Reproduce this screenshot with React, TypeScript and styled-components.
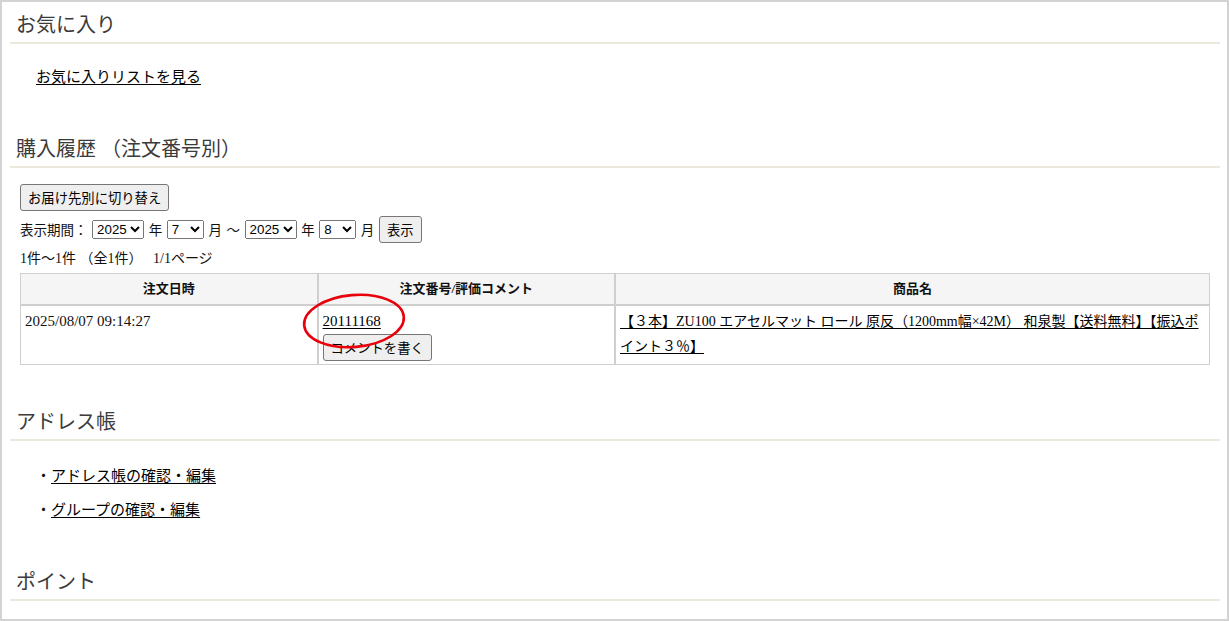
import React from "react";
import styled, { createGlobalStyle } from "styled-components";

const Global = createGlobalStyle`
  html, body { margin: 0; padding: 0; background: #fff; }
  body {
    font-family: "Liberation Serif", "Noto Sans CJK JP", serif;
    color: #111;
  }
  * { box-sizing: border-box; }
`;

const Frame = styled.div`
  height: 621px;
  border: 2px solid #d3d3d3;
  padding: 1px 7px 0 8px;
  overflow: hidden;
  background: #fff;
`;

const Section = styled.section<{ $after: number }>`
  padding-bottom: ${(p) => p.$after}px;
`;

const Heading = styled.h2`
  margin: 0;
  padding: 8px 6px 3px;
  font-family: "Liberation Serif", "Noto Sans CJK JP", serif;
  font-size: 20px;
  line-height: 28px;
  font-weight: 400;
  color: #3b3b3b;
  border-bottom: 2px solid #ebe9de;
`;

const Body = styled.div<{ $top: number; $indent: number }>`
  padding: ${(p) => p.$top}px 10px 0 ${(p) => p.$indent}px;
`;

const Line = styled.div`
  font-size: 15px;
  line-height: 22px;
`;

const TextLink = styled.a`
  color: #000;
  text-decoration: underline;
  text-underline-offset: 2px;
  cursor: pointer;
`;

const Button = styled.button`
  display: inline-block;
  font-family: "Noto Sans CJK JP", "Liberation Sans", sans-serif;
  font-size: 13.333px;
  line-height: 17px;
  padding: 4px 7px;
  border: 1px solid #767676;
  border-radius: 3px;
  background: #efefef;
  color: #000;
`;

const PeriodRow = styled.div`
  margin-top: 5px;
  display: flex;
  align-items: center;
  gap: 4.6px;
  height: 26px;
  font-family: "Noto Sans CJK JP", sans-serif;
  font-size: 13.5px;
  color: #111;
`;

const Select = styled.select`
  font-family: "Liberation Sans", Arial, sans-serif;
  font-size: 13.333px;
  color: #000;
`;

const Count = styled.div`
  margin-top: 7px;
  font-size: 14px;
  line-height: 20px;
`;

const Table = styled.table`
  margin-top: 4px;
  width: 100%;
  table-layout: fixed;
  border-collapse: separate;
  border-spacing: 0;
`;

const Th = styled.th<{ $wide?: boolean }>`
  width: ${(p) => (p.$wide ? "50%" : "auto")};
  border: 1px solid #cfcfcf;
  background: #f5f5f5;
  font-size: 13px;
  font-weight: 700;
  line-height: 24px;
  padding: 3px 4px;
  text-align: center;
  color: #111;
`;

const Td = styled.td<{ $small?: boolean }>`
  position: relative;
  border: 1px solid #cfcfcf;
  vertical-align: top;
  padding: 3px 4px;
  font-size: ${(p) => (p.$small ? "14px" : "15px")};
  line-height: 25px;
  color: #111;
`;

const CellLine = styled.div`
  line-height: 25px;
`;

const Annotation = styled.svg`
  position: absolute;
  left: -18px;
  top: -14px;
  width: 108px;
  height: 58px;
  pointer-events: none;
  overflow: visible;
`;

const List = styled.ul`
  margin: 0;
  padding: 0;
  list-style: none;
  display: flex;
  flex-direction: column;
  gap: 12px;
`;

const Item = styled.li`
  font-size: 15px;
  line-height: 22px;
`;

const years = ["2024", "2025"];
const months = Array.from({ length: 12 }, (_, i) => String(i + 1));

export default function App() {
  return (
    <>
      <Global />
      <Frame>
        <Section $after={39}>
          <Heading>お気に入り</Heading>
          <Body $top={22} $indent={26}>
            <Line>
              <TextLink>お気に入りリストを見る</TextLink>
            </Line>
          </Body>
        </Section>

        <Section $after={35}>
          <Heading>購入履歴 （注文番号別）</Heading>
          <Body $top={16} $indent={10}>
            <Button>お届け先別に切り替え</Button>
            <PeriodRow>
              <span>表示期間：</span>
              <Select defaultValue="2025">
                {years.map((y) => (
                  <option key={y}>{y}</option>
                ))}
              </Select>
              <span>年</span>
              <Select defaultValue="7">
                {months.map((m) => (
                  <option key={m}>{m}</option>
                ))}
              </Select>
              <span>月</span>
              <span>〜</span>
              <Select defaultValue="2025">
                {years.map((y) => (
                  <option key={y}>{y}</option>
                ))}
              </Select>
              <span>年</span>
              <Select defaultValue="8">
                {months.map((m) => (
                  <option key={m}>{m}</option>
                ))}
              </Select>
              <span>月</span>
              <Button>表示</Button>
            </PeriodRow>
            <Count>1件〜1件 （全1件）　 1/1ページ</Count>
            <Table>
              <thead>
                <tr>
                  <Th>注文日時</Th>
                  <Th>注文番号/評価コメント</Th>
                  <Th $wide>商品名</Th>
                </tr>
              </thead>
              <tbody>
                <tr>
                  <Td>2025/08/07 09:14:27</Td>
                  <Td>
                    <CellLine>
                      <TextLink>20111168</TextLink>
                    </CellLine>
                    <Button>コメントを書く</Button>
                    <Annotation viewBox="0 0 108 58">
                      <ellipse
                        cx="53"
                        cy="29"
                        rx="50"
                        ry="26"
                        fill="none"
                        stroke="#e8000b"
                        strokeWidth="2.6"
                        transform="rotate(-5 53 29)"
                      />
                    </Annotation>
                  </Td>
                  <Td $small>
                    <TextLink>
                      【３本】ZU100 エアセルマット ロール 原反（1200mm幅×42M） 和泉製【送料無料】【振込ポイント３％】
                    </TextLink>
                  </Td>
                </tr>
              </tbody>
            </Table>
          </Body>
        </Section>

        <Section $after={39}>
          <Heading>アドレス帳</Heading>
          <Body $top={24} $indent={26}>
            <List>
              <Item>
                <span>・</span>
                <TextLink>アドレス帳の確認・編集</TextLink>
              </Item>
              <Item>
                <span>・</span>
                <TextLink>グループの確認・編集</TextLink>
              </Item>
            </List>
          </Body>
        </Section>

        <Section $after={0}>
          <Heading>ポイント</Heading>
        </Section>
      </Frame>
    </>
  );
}
